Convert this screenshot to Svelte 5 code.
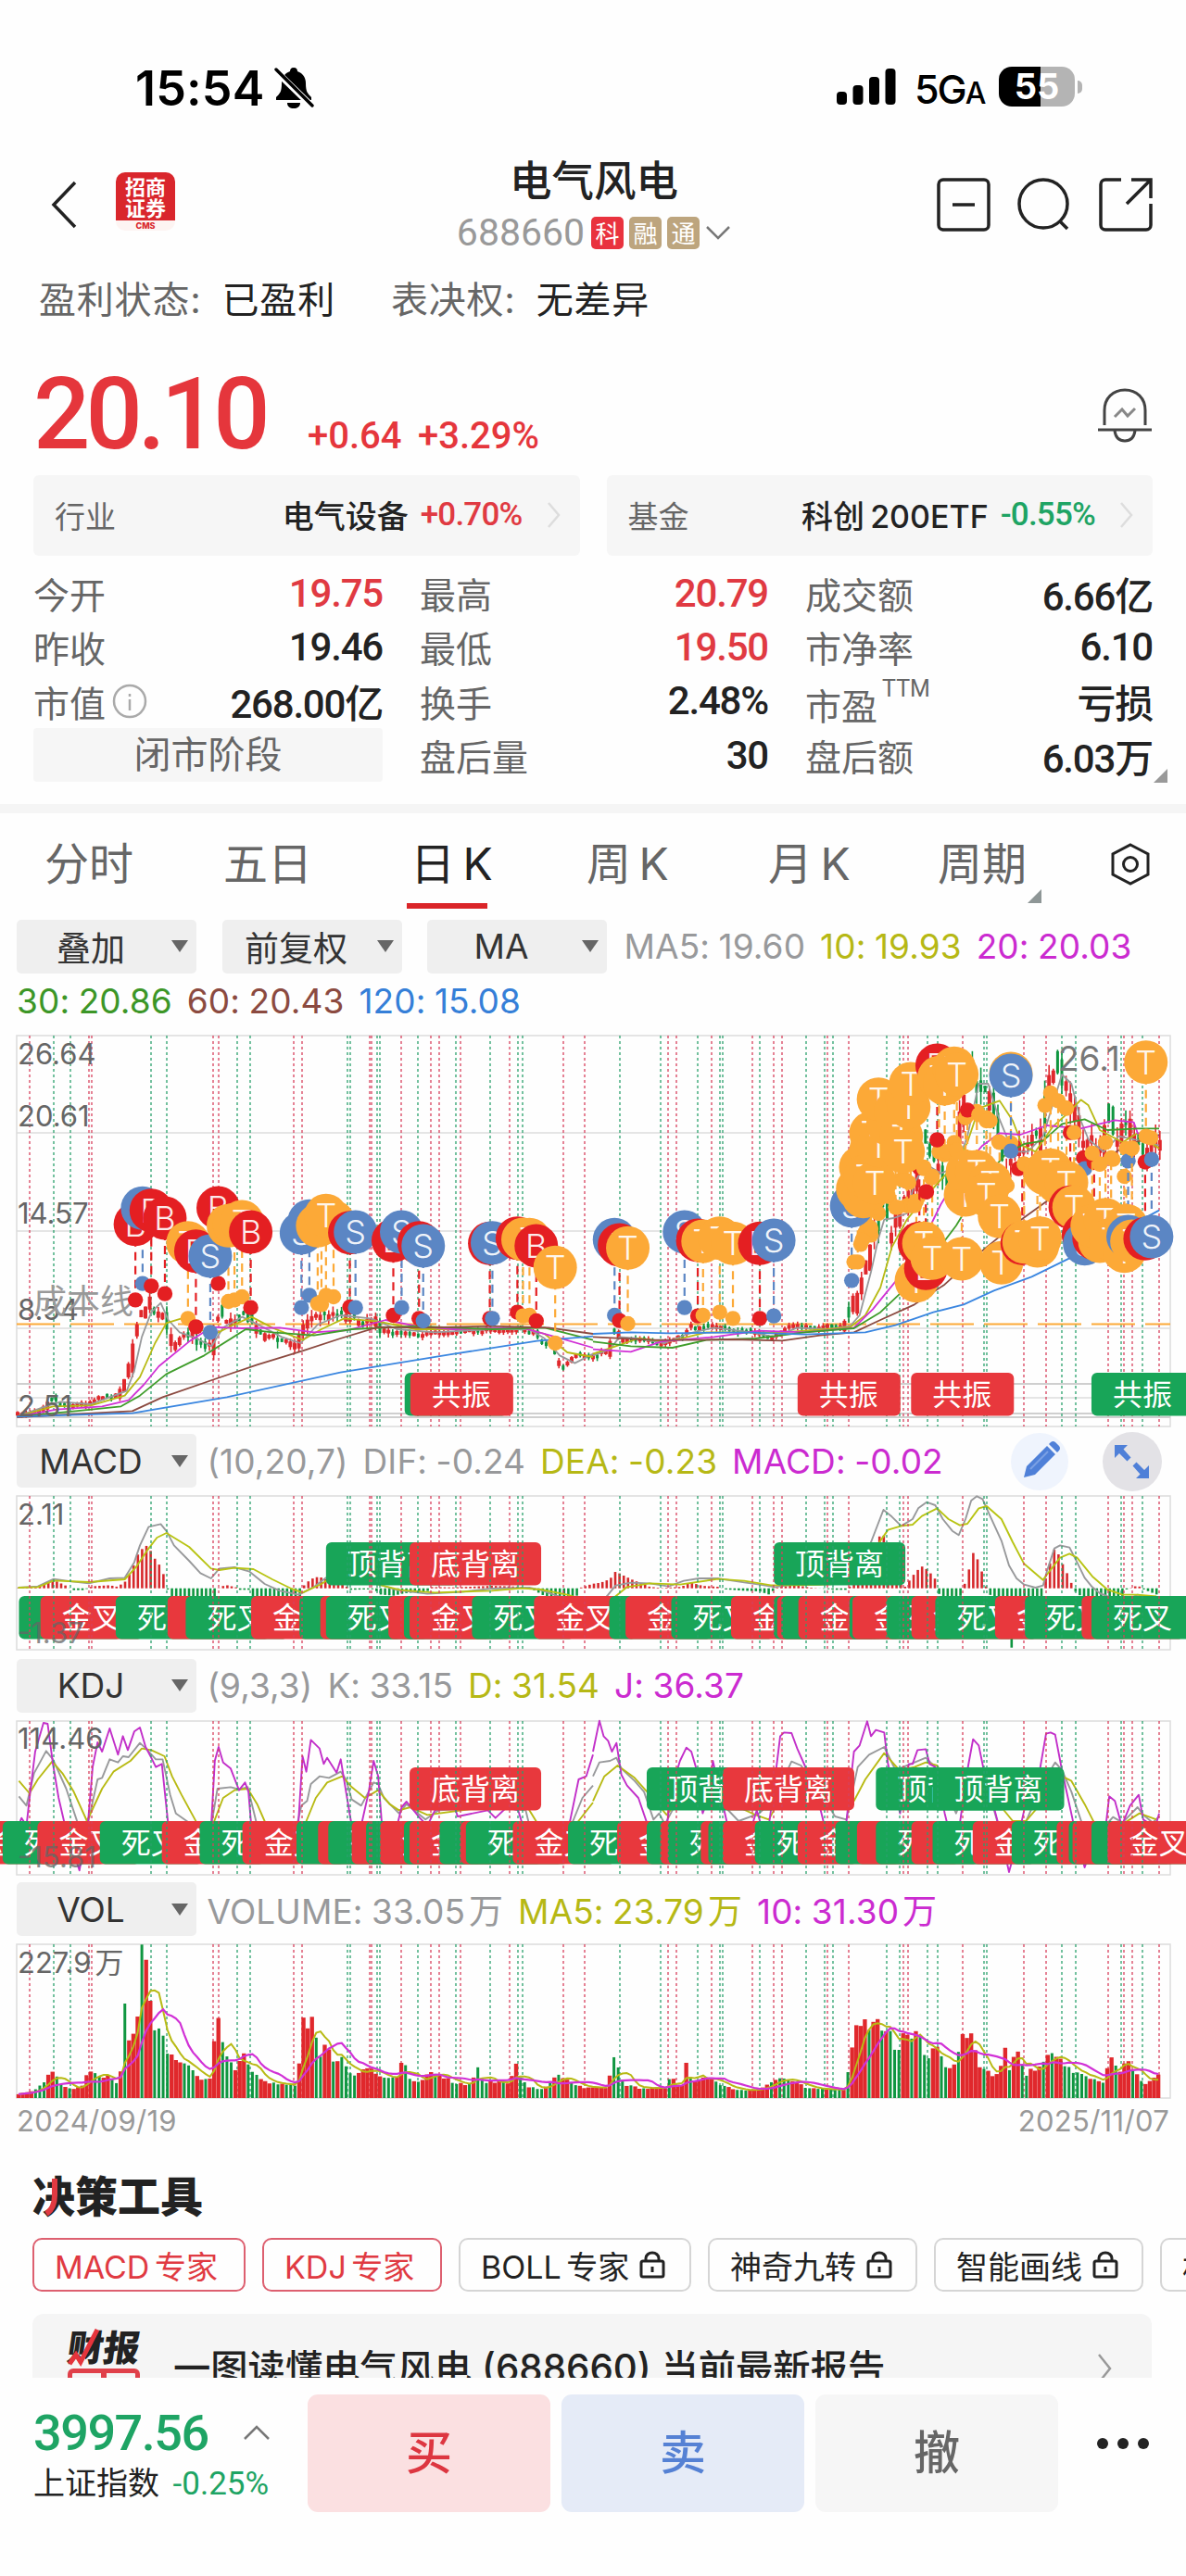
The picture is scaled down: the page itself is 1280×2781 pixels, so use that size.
<script lang="ts">
  const quotes = [
    { label: '今开', value: '19.75', up: true },
    { label: '最高', value: '20.79', up: true },
    { label: '成交额', value: '6.66亿' },
    { label: '昨收', value: '19.46' },
    { label: '最低', value: '19.50', up: true },
    { label: '市净率', value: '6.10' },
    { label: '市值', value: '268.00亿', info: true },
    { label: '换手', value: '2.48%' },
    { label: '市盈', value: '亏损', sup: 'TTM' },
    { label: '闭市阶段', stage: true },
    { label: '盘后量', value: '30' },
    { label: '盘后额', value: '6.03万', corner: true }
  ];

  const tabs = [
    { name: '分时', left: 48 },
    { name: '五日', left: 241 },
    { name: '日 K', left: 443, active: true },
    { name: '周 K', left: 633 },
    { name: '月 K', left: 829 },
    { name: '周期', left: 1012 }
  ];

  const chips = [
    { name: 'MACD 专家', width: 230, on: true },
    { name: 'KDJ 专家', width: 194, on: true },
    { name: 'BOLL 专家', width: 251, lock: true },
    { name: '神奇九转', width: 226, lock: true },
    { name: '智能画线', width: 226, lock: true },
    { name: '机构', width: 226 }
  ];

  // signal lines shared by all four charts
  const redLines = [32, 96, 99, 230, 236, 317, 326, 399, 401, 433, 465, 474, 497, 550, 608, 631, 721, 730, 768, 812, 835, 844, 893, 916, 975, 980, 1039, 1105, 1129, 1196, 1213, 1222, 1251];
  const greenLines = [58, 76, 163, 180, 256, 270, 375, 378, 407, 410, 451, 492, 529, 559, 564, 669, 713, 753, 777, 780, 820, 870, 890, 899, 957, 971, 1001, 1012, 1062, 1065, 1146, 1161, 1210, 1233];

  // chart data is sampled on a 2.45 x 3 grid, split into two halves of 640px
  const GX = 2.45;
  const GY = 3;
  const HALF = 'translate(640 0) scale(0.408163 0.333333)';
  const FULL = 'scale(0.408163 0.333333)';

  let seed = 7;
  function rnd() {
    seed = (seed * 16807) % 2147483647;
    return seed / 2147483647;
  }

  function at(pts: number[][], x: number) {
    if (x <= pts[0][0]) return pts[0][1];
    for (let i = 1; i < pts.length; i++) {
      if (x <= pts[i][0]) {
        const [x0, y0] = pts[i - 1];
        const [x1, y1] = pts[i];
        return y0 + ((y1 - y0) * (x - x0)) / (x1 - x0);
      }
    }
    return pts[pts.length - 1][1];
  }

  const pairs = (s: string) => s.trim().split(/\s+/).map((p) => p.split(',').map(Number));

  const price = pairs(`18,418 41,413 50,408 58,397 64,405 76,408 96,405 106,399 127,397 133,388 137,375 142,362 146,337 150,307 155,315 159,297
    163,300 169,313 178,310 182,327 188,343 200,327 212,337 229,343 234,330 236,300 245,317 261,310 271,313 282,330 302,337 322,341 329,320 339,312
    367,307 388,317 408,313 412,330 433,328 457,331 490,328 563,325 580,330 586,340 600,343 603,362 608,367 616,360 624,353 640,355 658,347 664,323
    671,337 689,335 713,342 738,333 744,323 771,322 795,327 820,328 832,337 852,322 885,323 913,323 917,308 926,290 932,267 940,243 946,213 954,187
    962,220 975,190 987,167 999,123 1011,147 1024,160 1040,83 1048,40 1056,67 1069,77 1077,107 1085,153 1097,133 1113,123 1126,113 1130,67 1142,30
    1150,67 1162,93 1171,133 1179,123 1191,140 1197,87 1207,127 1216,103 1232,133 1252,123`);

  const candles: any[] = [];
  for (let x = 19; x < 1254; x += 4.6) {
    const a = at(price, x);
    const b = at(price, x + 4.6);
    const wild = x > 915 ? 14 : x > 140 && x < 420 ? 7 : 3;
    const mid = a + (rnd() - 0.5) * wild;
    const body = Math.max(4, Math.abs(b - a) * 0.9 + rnd() * wild);
    const wick = body / 2 + rnd() * wild;
    candles.push({ x, y: mid - body / 2, h: body, y1: mid - wick, y2: mid + wick, up: b < a ? rnd() > 0.15 : rnd() > 0.6 });
  }

  // kind, x, badge y, dot y
  const leftMarks = `B,358,635,880 S,377,583,827 B,400,590,835 B,436,615,860 T,497,695,940 B,518,722,967 S,556,738,985 B,577,582,827
    T,604,640,885 T,620,636,880 T,640,627,870 B,663,660,905 S,797,663,905 S,818,625,865 T,840,640,892 T,850,632,895 T,882,628,870 T,862,607,865
    B,925,662,903 S,940,660,905 B,1040,688,930 S,1062,660,905 B,1108,695,940 S,1119,705,948 B,1295,697,940 S,1302,695,940 B,1368,680,920
    T,1383,684,932 T,1400,685,930 B,1418,705,948 T,1468,775,1020`;
  const rightMarks = `S,57,685,930 B,70,702,947 T,92,712,957 S,242,660,905 B,277,687,932 T,291,690,930 T,335,680,920 T,370,697,940 B,441,697,940 S,478,687,932
    S,684,575,817 T,700,520,757 T,715,545,680 T,730,520,645 T,708,450,700 T,735,395,670 T,720,480,660 T,745,500,590 T,735,340,650 T,755,380,600
    T,780,310,545 T,755,230,540 T,800,270,580 T,815,350,490 T,830,230,575 T,835,255,500 T,820,400,492 T,840,180,575
    B,910,120,362 T,915,160,400 T,930,180,410 T,955,130,370 T,962,150,420
    T,855,818,560 B,880,778,530 B,863,697,452 T,875,697,450 T,897,745,480 T,975,747,430
    T,985,540,290 T,990,465,280 T,1015,465,270 T,1050,500,300 T,1040,540,290 T,1075,610,370 T,1080,760,510 B,1135,697,450 T,1140,692,440 T,1175,705,430 T,1182,680,420
    T,1195,470,250 T,1210,460,210 T,1230,500,235 T,1252,500,260 B,1262,580,338 T,1272,580,338 B,1297,670,420 S,1300,698,455 B,1325,680,435
    T,1340,690,440 T,1320,640,405 T,1355,620,370 T,1370,685,420 T,1410,640,390 T,1405,722,480 S,1415,675,430 T,1425,690,390 B,1460,682,433 S,1477,675,425
    T,1105,147,372 S,1105,153,398 T,1462,110,350`;
  const toMarks = (s: string, off: number) =>
    s.trim().split(/\s+/).map((m) => {
      const [k, x, y, d] = m.split(',');
      return { k, x: off + +x / GX, y: +y / GY, d: +d / GY };
    });
  const marks = [...toMarks(leftMarks, 0), ...toMarks(rightMarks, 640)];
  const tone: Record<string, string> = { B: '#e41f22', S: '#5b86c4', T: '#fca937' };

  const dots = toMarks(`B,990,265,265 T,1020,280,280 T,1040,300,300 T,1073,368,368 B,1125,455,455 T,1150,445,445 T,1140,440,440 T,1250,258,258
    T,1340,440,440 T,1375,425,425 T,1475,355,355 T,780,540,540 T,805,580,580 T,825,490,490 T,690,757,757 T,712,685,685 T,733,645,645 T,875,455,455
    T,895,485,485 B,882,530,530 T,935,400,400 T,960,395,395 B,910,362,362 T,1095,510,510 T,1180,440,440 T,1425,388,388 T,850,575,575`, 640);

  const ma = [
    { color: '#98999b', l: '45,1258 120,1225 160,1210 240,1218 290,1195 335,1175 355,1110 375,1000 400,920 425,890 445,945 475,985 520,1005 560,1030 590,970 640,935 690,965 745,1000 795,1020 840,960 900,930 980,940 1010,955 1050,975 1150,985 1300,975 1400,975 1440,1005 1480,1060 1520,1085 1568,1055', r: '0,1060 45,1040 70,1000 120,1005 190,1020 250,990 320,970 420,985 480,1000 540,970 620,975 680,965 705,930 735,790 755,680 770,620 795,615 830,600 850,500 880,440 920,470 960,450 990,350 1020,180 1045,180 1070,280 1110,400 1150,400 1190,350 1225,210 1240,150 1265,180 1290,300 1310,360 1350,400 1390,350 1430,360 1497,380' },
    { color: '#b8ba14', l: '45,1258 140,1225 240,1222 330,1190 370,1130 410,1020 440,955 480,940 520,975 570,990 610,965 665,935 720,970 800,1010 850,975 910,940 1000,950 1100,975 1200,975 1380,970 1440,990 1500,1050 1568,1065', r: '0,1055 60,1030 120,1005 200,1015 300,985 420,985 500,985 620,975 680,968 720,930 760,840 790,710 830,620 870,560 920,490 960,440 990,370 1020,260 1075,235 1110,300 1135,380 1170,400 1215,320 1260,270 1290,232 1310,250 1340,330 1400,370 1440,340 1497,390' },
    { color: '#d131d6', l: '45,1258 150,1235 270,1225 340,1205 380,1155 420,1095 500,1015 560,968 640,972 740,970 830,985 920,978 1020,945 1100,965 1200,975 1380,970 1470,1000 1568,1035', r: '0,1040 100,1048 180,1015 320,1000 440,980 560,985 690,970 740,910 800,820 860,720 920,570 980,450 1030,380 1075,340 1130,345 1200,315 1290,325 1380,298 1430,305 1440,340 1497,350' },
    { color: '#3f9d2b', l: '45,1258 200,1240 320,1225 370,1190 440,1120 540,1060 650,975 720,985 830,995 930,975 1100,965 1300,975 1440,970 1568,1010', r: '0,1015 100,1030 210,1035 300,1010 430,1005 560,985 690,972 760,920 820,850 880,770 960,640 1040,480 1090,410 1140,375 1190,365 1240,310 1300,295 1360,330 1440,325 1497,325' },
    { color: '#8b4a40', l: '45,1260 200,1250 350,1240 430,1195 560,1140 680,1090 800,1045 900,1005 1000,968 1120,970 1300,965 1450,970 1568,990', r: '0,1000 160,1010 260,1010 370,1008 500,1012 600,995 690,985 760,945 850,895 930,830 1020,730 1110,640 1200,560 1270,490 1340,430 1420,375 1497,345' },
    { color: '#3a86e0', l: '45,1258 350,1247 600,1195 900,1115 1200,1055 1420,1013 1568,998', r: '0,990 100,985 200,988 400,985 560,992 720,985 800,962 900,920 980,895 1060,850 1160,805 1260,745 1340,690 1420,640 1497,590' }
  ];

  const histPts = [
    ...pairs(`45,2 100,5 125,18 137,30 175,8 190,-6 225,-6 235,3 250,7 290,10 310,5 330,20 347,55 368,120 390,140 410,95 425,70 437,30 441,2 452,-25 570,-25
      580,5 600,10 625,3 630,-5 660,-5 668,-25 795,-25 800,5 822,30 843,38 880,20 915,8 925,-5 990,-3 1005,-20 1040,-24 1070,-16 1130,-10 1140,4 1200,3
      1300,8 1380,5 1400,2 1425,-15 1440,-25 1525,-25 1535,2 1568,15`).map(([x, y]) => [x / GX, y / GY]),
    ...pairs(`1,15 20,18 45,30 60,55 75,45 100,30 150,5 180,1 235,5 255,20 290,8 330,5 345,-3 400,-8 440,-10 465,-20 480,-5 490,5 540,10 570,3 640,-5 675,-5
      680,10 720,60 760,175 770,170 800,60 815,20 825,5 845,40 868,72 885,60 905,30 912,-10 920,-30 970,-30 980,4 990,40 1005,115 1015,100 1035,30
      1041,-3 1055,-30 1092,-40 1100,-195 1112,-190 1118,-40 1190,-30 1198,40 1222,135 1245,70 1257,40 1270,2 1280,-20 1310,-30 1400,-25 1412,-2 1426,2
      1440,10 1455,-3 1490,-20 1500,-10`).map(([x, y]) => [640 + x / GX, y / GY])
  ];
  const hist: any[] = [];
  for (let x = 20; x < 1252; x += 4.6) hist.push({ x, v: at(histPts, x) });

  const dif = [
    '48,522 100,518 142,494 190,502 235,508 290,492 330,490 355,440 370,385 393,325 425,316 441,340 460,385 500,435 530,475 558,492 580,460 620,456 660,470 700,510 740,532 790,545 830,520 862,490 930,480 1010,515 1050,530 1130,542 1220,536 1300,525 1400,522 1430,530 1500,560 1568,590',
    '0,600 40,545 60,515 100,506 150,508 200,518 240,500 280,492 330,492 400,505 440,512 480,520 540,510 600,512 660,500 700,470 735,375 768,270 790,292 815,322 845,300 860,265 882,245 905,255 925,300 950,338 967,352 985,300 1000,240 1015,226 1030,235 1050,290 1080,370 1100,450 1120,492 1140,512 1170,522 1190,515 1200,470 1220,395 1235,385 1260,392 1280,440 1300,490 1320,520 1340,540 1400,570 1440,545 1490,560'
  ];
  const dea = [
    '48,522 100,520 142,499 235,504 330,495 360,455 390,400 415,360 440,345 500,390 558,460 580,465 620,458 670,462 720,495 770,525 800,538 850,510 862,500 930,490 1010,515 1060,530 1150,538 1300,532 1380,524 1430,528 1500,545 1568,570',
    '0,580 60,550 90,520 150,508 230,512 330,494 400,500 470,514 540,514 620,512 680,505 720,460 760,370 780,335 815,322 845,318 870,290 910,265 940,300 970,320 990,315 1020,265 1041,258 1080,300 1110,375 1140,445 1190,497 1200,480 1235,425 1260,412 1280,425 1320,485 1360,528 1400,545 1440,545 1490,550'
  ];

  const kdj = [
    { color: '#98999b', l: '50,1195 70,1225 90,1120 122,1048 140,1075 175,1170 205,1280 233,1280 258,1140 270,1135 290,1075 312,1085 325,1065 340,1068 370,1022 390,1045 412,1075 430,1075 450,1190 465,1250 500,1280 560,1280 575,1170 610,1165 632,1172 655,1165 668,1230 680,1290 785,1290 797,1225 812,1210 822,1155 845,1130 870,1135 901,1115 915,1140 930,1205 955,1225 988,1150 1000,1155 1015,1200 1055,1250 1075,1220 1125,1270 1160,1240 1300,1230 1390,1240 1400,1290 1510,1290 1540,1200 1568,1160', r: '0,1130 17,1085 45,1080 62,1070 75,1105 110,1145 135,1180 160,1270 175,1250 190,1285 210,1240 247,1130 272,1130 300,1180 317,1150 350,1230 385,1275 440,1250 480,1200 525,1082 550,1095 600,1180 640,1260 670,1270 700,1100 730,1060 770,1035 800,1110 840,1090 880,1070 905,1100 960,1250 1005,1110 1035,1130 1070,1280 1140,1290 1190,1150 1222,1085 1240,1110 1265,1180 1295,1290 1355,1290 1375,1262 1400,1280 1440,1230 1455,1255 1480,1280 1497,1260' },
    { color: '#b8ba14', l: '50,1145 78,1185 100,1140 138,1082 165,1120 195,1180 230,1275 270,1170 300,1115 345,1080 375,1040 400,1045 435,1065 455,1130 480,1190 520,1280 565,1280 590,1200 620,1175 655,1170 680,1220 705,1290 805,1290 835,1200 865,1150 905,1130 930,1165 965,1200 1000,1175 1030,1220 1055,1240 1085,1230 1130,1255 1250,1235 1390,1220 1420,1280 1520,1290 1568,1215', r: '0,1210 30,1130 65,1095 110,1135 150,1190 195,1255 230,1200 270,1150 330,1160 385,1230 430,1255 465,1270 500,1190 545,1120 600,1150 650,1220 690,1210 720,1140 770,1055 810,1110 850,1100 880,1085 910,1095 950,1180 1000,1160 1040,1140 1080,1230 1110,1275 1145,1275 1190,1210 1240,1130 1265,1145 1300,1220 1325,1280 1400,1285 1445,1250 1490,1270' },
    { color: '#c22fc9', l: '45,1300 57,1265 70,1290 80,1180 93,1050 115,957 126,960 140,1090 155,1200 172,1290 210,1435 232,1290 245,1100 258,1020 270,1050 290,975 312,1060 325,1000 338,1045 355,985 370,972 385,1035 400,1070 412,1100 428,1090 446,1300 558,1300 568,1080 578,1035 590,1085 610,1105 632,1175 648,1150 657,1180 665,1300 788,1300 800,1065 810,1115 822,1012 845,1040 856,1090 865,1070 890,1118 901,1075 915,1180 930,1290 955,1290 975,1180 988,1080 1000,1130 1010,1290 1050,1290 1062,1230 1075,1212 1110,1265 1130,1290 1150,1240 1200,1220 1210,1260 1290,1240 1310,1265 1340,1230 1370,1240 1385,1300 1503,1300 1530,1140 1550,1130 1568,1060', r: '0,1050 17,950 28,1000 40,1015 50,1050 62,1022 75,1125 90,1160 120,1200 148,1300 195,1300 205,1180 230,1080 247,1037 260,1050 272,1100 290,1250 305,1200 317,1080 330,1150 358,1300 418,1300 433,1240 445,1290 465,1290 480,1150 495,1000 505,988 525,990 540,1040 560,1095 590,1180 614,1300 668,1300 690,1050 705,1030 725,952 735,1000 748,980 770,988 780,1090 812,1250 835,1090 845,1090 858,1045 880,1042 890,1090 905,1100 930,1250 940,1300 968,1300 990,1110 1005,1010 1020,1030 1035,1120 1060,1230 1075,1300 1100,1440 1120,1350 1140,1240 1180,1120 1198,992 1210,988 1222,995 1240,1110 1270,1280 1300,1425 1330,1320 1355,1300 1365,1195 1380,1210 1398,1290 1420,1225 1443,1190 1455,1270 1480,1290 1490,1280 1497,1250' }
  ];

  const volPts = pairs(`22,12 45,25 58,50 62,80 68,90 80,50 95,25 110,40 117,85 130,70 145,70 158,35 162,160 165,160 168,305 172,140 178,265 187,285 190,497 195,380 200,320
    205,220 212,235 222,150 235,130 250,105 265,60 280,65 284,200 290,285 296,165 300,130 310,90 322,140 335,80 350,55 370,45 390,40 396,110 401,250 405,170
    411,325 416,200 425,140 433,200 440,110 450,140 460,90 470,70 487,100 510,65 527,65 533,140 540,60 555,50 567,85 585,70 600,50 620,45 632,100 640,50 655,55
    670,45 682,105 690,60 700,35 720,30 737,75 750,60 770,35 803,35 810,130 817,100 825,45 850,30 880,35 886,75 895,40 903,45 908,125 915,50 940,70 955,40 980,25
    1005,30 1025,65 1047,60 1065,35 1090,30 1118,25 1123,140 1130,210 1141,270 1147,190 1152,240 1163,245 1168,180 1174,260 1185,140 1195,210 1215,200
    1225,130 1240,180 1250,95 1262,120 1273,200 1285,215 1292,110 1310,80 1320,70 1328,170 1335,90 1345,155 1355,75 1375,110 1390,155 1410,100 1430,75
    1460,50 1467,135 1480,80 1489,130 1500,80 1515,45 1534,80`).map(([x, y]) => [x / 1.225, y / 3]);
  const vols: any[] = [];
  for (let i = 0; i < 269; i++) {
    const x = 20 + i * 4.59;
    const v = at(volPts, x);
    const falling = at(volPts, x - 4.6) > v;
    vols.push({ x, v: Math.max(4, v * (0.9 + rnd() * 0.18)), up: falling ? rnd() > 0.7 : rnd() > 0.12 });
  }
  // the two tallest green sessions
  for (const [px, v] of [[137, 102], [155, 165.7]]) {
    const b = vols[Math.round((px - 20) / 4.59)];
    b.v = v;
    b.up = false;
  }
  function average(n: number) {
    return vols
      .map((b, i) => {
        const part = vols.slice(Math.max(0, i - n + 1), i + 1);
        return `${b.x.toFixed(1)},${(234 - part.reduce((s, p) => s + p.v, 0) / part.length).toFixed(1)}`;
      })
      .join(' ');
  }
  const vol5 = average(5);
  const vol10 = average(10);

  // color, x, text
  const tags = (s: string, off: number, y: number) =>
    s.trim().split(/\s+/).map((t) => {
      const [c, x, text] = t.split(',');
      const label = text ?? (c === 'R' ? '金叉' : '死叉');
      return { c, x: off + +x / GX, y, label, w: label.length === 3 ? 142 : 111 };
    });
  const mainTags = [...tags('G,1070,共振 R,1085,共振', 0, 372), ...tags('R,541,共振 R,841,共振 G,1318,共振', 640, 372)];
  const macdTags = [
    ...tags('G,50 R,107 G,306 R,443 G,491 R,664 G,792 R,847 G,862 R,1027 G,1068 R,1083 G,1248 R,1412', 0, 183),
    ...tags('G,43 R,86 G,207 R,365 G,478 R,487 G,498 R,543 G,678 R,686 G,777 R,842 G,905 R,1063 G,1142 R,1292 G,1318', 640, 183),
    ...tags('G,862,顶背离 R,1083,底背离', 0, 125),
    ...tags('G,478,顶背离', 640, 125)
  ];
  const kdjTags = [
    ...tags('R,-80 G,7 R,99 G,264 R,428 G,528 R,641 G,784 R,841 G,868 R,930 G,968 R,1005 G,1068 R,1083 G,1162 R,1218 G,1232 R,1356 G,1502', 0, 425),
    ...tags('R,64 G,142 R,178 G,198 R,285 G,305 R,343 G,428 R,541 G,641 R,698 G,748 R,842 G,898 R,1004 G,1107 R,1226 G,1258 R,1268 G,1318 R,1361', 640, 425),
    ...tags('R,1083,底背离', 0, 367),
    ...tags('G,142,顶背离 R,343,底背离 G,748,顶背离 G,898,顶背离', 640, 367)
  ];
</script>

{#snippet signals(y1, y2)}
  {#each redLines as x}
    <line x1={x} x2={x} {y1} {y2} class="sig red" />
  {/each}
  {#each greenLines as x}
    <line x1={x} x2={x} {y1} {y2} class="sig green" />
  {/each}
{/snippet}

{#snippet pills(list)}
  {#each list as t}
    <rect x={t.x} y={t.y} width={t.w} height="46.5" rx="6" fill={t.c === 'R' ? '#e8383d' : '#18a558'} />
    <text x={t.x + 23} y={t.y + 35} class="pill">{t.label}</text>
  {/each}
{/snippet}

{#snippet drop(name)}
  <div class="drop"><span>{name}</span><i></i></div>
{/snippet}

{#snippet arrow()}
  <svg class="arrow" width="16" height="30" viewBox="0 0 16 30"><path d="M2 2l11 13L2 28" /></svg>
{/snippet}

<main class="screen">
  <div class="status">
    <span class="time">15:54</span>
    <svg class="mute" width="44" height="46" viewBox="0 0 44 46">
      <path d="M22 1c3 0 4 2 4 4 6 2 9 7 9 13 0 9 2 11 6 15v3H3v-3c4-4 6-6 6-15 0-6 3-11 9-13 0-2 1-4 4-4zM15 39h14c0 4-3 6-7 6s-7-2-7-6z" />
      <path d="M1 3l41 40" stroke="#fff" stroke-width="7" />
      <path d="M3 3l39 39" stroke="#000" stroke-width="3.4" stroke-linecap="round" />
    </svg>
    <svg class="signal" width="64" height="40" viewBox="0 0 64 40">
      <rect x="0" y="25" width="11" height="14" rx="4" />
      <rect x="17.5" y="18" width="11" height="21" rx="4" />
      <rect x="35" y="9" width="11" height="30" rx="4" />
      <rect x="52.5" y="0" width="11" height="39" rx="4" />
    </svg>
    <span class="net">5G<small>A</small></span>
    <div class="battery"><span>55</span></div>
  </div>

  <header>
    <svg class="back" width="30" height="52" viewBox="0 0 30 52"><path d="M27 2L4 26l23 24" /></svg>
    <div class="logo"><b>招商<br />证券</b><em>CMS</em></div>
    <div class="title">
      <h1>电气风电</h1>
      <div class="code">
        <span>688660</span><i class="hot">科</i><i>融</i><i>通</i>
        <svg width="28" height="18" viewBox="0 0 28 18"><path d="M2 3l12 12L26 3" /></svg>
      </div>
    </div>
    <div class="tools">
      <svg width="58" height="58" viewBox="0 0 58 58"><rect x="2" y="2" width="54" height="54" rx="5" /><path d="M17 29h24" /></svg>
      <svg width="58" height="58" viewBox="0 0 58 58"><circle cx="28" cy="28" r="26" /><path d="M45 46l9 9" /></svg>
      <svg width="58" height="58" viewBox="0 0 58 58"><path d="M24 2H7a5 5 0 0 0-5 5v44a5 5 0 0 0 5 5h44a5 5 0 0 0 5-5V28M35 2h21v20M56 2L30 28" /></svg>
    </div>
  </header>

  <div class="traits">
    <span>盈利状态:</span><b>已盈利</b><span class="second">表决权:</span><b>无差异</b>
  </div>

  <section class="price">
    <strong>20.10</strong><span>+0.64</span><span class="pct">+3.29%</span>
    <svg width="60" height="60" viewBox="0 0 60 60">
      <path d="M8 40V24C8 11 17 2 30 2s22 9 22 22v16M1 45h58M19 46c1 7 5 11 11 11s10-4 11-11" />
      <path class="soft" d="M19 31l8-8 6 7 8-8" />
    </svg>
  </section>

  <div class="related">
    <div class="card"><span>行业</span><b>电气设备</b><em class="up">+0.70%</em>{@render arrow()}</div>
    <div class="card"><span>基金</span><b>科创 200ETF</b><em class="down">-0.55%</em>{@render arrow()}</div>
  </div>

  <div class="quotes">
    {#each quotes as q}
      {#if q.stage}
        <div class="stage">{q.label}</div>
      {:else}
        <div class="quote" class:low={q.sup}>
          <span>{q.label}</span>
          {#if q.info}
            <svg width="38" height="38" viewBox="0 0 38 38"><circle cx="19" cy="19" r="17" /><path d="M19 11v3M19 17v12" /></svg>
          {/if}
          {#if q.sup}<sup>{q.sup}</sup>{/if}
          <b class:red={q.up}>{q.value}</b>
          {#if q.corner}<i class="corner"></i>{/if}
        </div>
      {/if}
    {/each}
  </div>

  <nav>
    {#each tabs as tab, i}
      <span class:active={tab.active} style:width="{(tabs[i + 1]?.left ?? 1198) - tab.left}px">{tab.name}{#if i === 5}<i class="corner"></i>{/if}</span>
    {/each}
    <svg width="44" height="46" viewBox="0 0 44 46"><path d="M22 2l19 10v22L22 44 3 34V12z" /><circle cx="22" cy="23" r="7.5" /></svg>
  </nav>

  <div class="indicators">
    {@render drop('叠加')}
    {@render drop('前复权')}
    {@render drop('MA')}
    <span class="gray">MA5: 19.60</span><span class="olive">10: 19.93</span><span class="pink">20: 20.03</span>
  </div>
  <div class="indicators second-row">
    <span class="leaf">30: 20.86</span><span class="brown">60: 20.43</span><span class="blue">120: 15.08</span>
  </div>

  <svg class="chart" width="1280" height="439" viewBox="0 0 1280 439">
    <rect x="18" y="8" width="1245" height="422" class="frame" />
    {#each [113, 219, 324, 399] as y}
      <path d="M18 {y}H1263" class="grid" />
    {/each}
    <path d="M18 384H1263M18 416H1263M18 420H1263" class="grid heavy" />
    {@render signals(8, 430)}
    <path d="M18 319.5H1263" stroke="#fca937" stroke-width="2" stroke-dasharray="47 11" />
    {#each candles as c}
      <path d="M{c.x} {c.y1}V{c.y2}" stroke={c.up ? '#e0282c' : '#0f9640'} stroke-width="1.6" />
      <path d="M{c.x} {c.y}v{c.h}" stroke={c.up ? '#e0282c' : '#0f9640'} stroke-width={c.up ? 4 : 3} />
    {/each}
    {#each ma as m}
      <g fill="none" stroke={m.color} stroke-width="1.8">
        <polyline class="curve" transform={FULL} points={m.l} />
        <polyline class="curve" transform={HALF} points={m.r} />
      </g>
    {/each}
    <text x="19" y="39" class="axis">26.64</text>
    <text x="19" y="106" class="axis">20.61</text>
    <text x="19" y="211" class="axis">14.57</text>
    <text x="19" y="315" class="axis">8.54</text>
    <text x="19" y="419" class="axis">2.51</text>
    <text x="36" y="308" class="cost">成本线</text>
    <text x="1142" y="46" class="peak">26.1</text>
    {#each marks as m}
      <path d="M{m.x} {m.y}V{m.d}" stroke={tone[m.k]} stroke-width="2.2" stroke-dasharray="9 6" />
      <circle cx={m.x} cy={m.d} r="8.2" fill={tone[m.k]} />
    {/each}
    {#each dots as m}
      <circle cx={m.x} cy={m.y} r="8.2" fill={tone[m.k]} />
    {/each}
    {#each marks as m}
      <circle cx={m.x} cy={m.y} r="23.5" fill={tone[m.k]} />
      <text x={m.x} y={m.y + 13} class="badge">{m.k}</text>
    {/each}
    {@render pills(mainTags)}
  </svg>

  <div class="indicators">
    {@render drop('MACD')}
    <span class="gray">(10,20,7)</span><span class="gray">DIF: -0.24</span><span class="olive">DEA: -0.23</span><span class="pink">MACD: -0.02</span>
    <svg class="round" width="64" height="64" viewBox="0 0 64 64">
      <circle cx="32" cy="32" r="31" fill="#eff4fd" />
      <path d="M15 49l3-12 22-22 9 9-22 22zM42 13l2-2a4 4 0 0 1 5 0l4 4a4 4 0 0 1 0 5l-2 2z" fill="#4f80d8" />
      <path d="M22 40l19-19" stroke="#7ba0e4" stroke-width="2" />
    </svg>
    <svg class="round last" width="64" height="64" viewBox="0 0 64 64">
      <circle cx="32" cy="32" r="32" fill="#e3e2e6" />
      <g fill="#4f80d8"><path d="M13 14h14l-4.5 4.5 8 9-4 4-8.5-8.5L13 28z" /><path d="M50 50H36l4.5-4.5-8-9 4-4 8.5 8.5L50 36z" /></g>
    </svg>
  </div>

  <svg class="chart" width="1280" height="185" viewBox="0 66 1280 185">
    <rect x="18" y="75" width="1245" height="166" class="frame" />
    {#each hist as h}
      <path d="M{h.x} 174.7v{-h.v}" stroke={h.v > 0 ? '#d6282b' : '#0f9640'} stroke-width="2.6" />
    {/each}
    <g fill="none" stroke="#98999b" stroke-width="1.9">
      <polyline class="curve" transform={FULL} points={dif[0]} />
      <polyline class="curve" transform={HALF} points={dif[1]} />
    </g>
    <g fill="none" stroke="#b8c414" stroke-width="1.9">
      <polyline class="curve" transform={FULL} points={dea[0]} />
      <polyline class="curve" transform={HALF} points={dea[1]} />
    </g>
    {@render pills(macdTags)}
    {@render signals(75, 241)}
    <text x="19" y="106" class="axis">2.11</text>
    <text x="19" y="234" class="axis faint">-1.37</text>
  </svg>

  <div class="indicators">
    {@render drop('KDJ')}
    <span class="gray">(9,3,3)</span><span class="gray">K: 33.15</span><span class="olive">D: 31.54</span><span class="pink">J: 36.37</span>
  </div>

  <svg class="chart" width="1280" height="184" viewBox="0 308 1280 184">
    <rect x="18" y="317" width="1245" height="166" class="frame" />
    {#each kdj as k}
      <g fill="none" stroke={k.color} stroke-width="1.9">
        <polyline class="curve" transform={FULL} points={k.l} />
        <polyline class="curve" transform={HALF} points={k.r} />
      </g>
    {/each}
    {@render pills(kdjTags)}
    {@render signals(317, 483)}
    <text x="19" y="347" class="axis">114.46</text>
    <text x="19" y="475" class="axis faint">-15.81</text>
  </svg>

  <div class="indicators">
    {@render drop('VOL')}
    <span class="gray">VOLUME: 33.05<u>万</u></span><span class="olive">MA5: 23.79<u>万</u></span><span class="pink">10: 31.30<u>万</u></span>
  </div>

  <svg class="chart" width="1280" height="183" viewBox="0 59 1280 183">
    <rect x="18" y="68" width="1245" height="166" class="frame" />
    {@render signals(68, 234)}
    {#each vols as b}
      <path d="M{b.x} 234v{-b.v}" stroke={b.up ? '#e0282c' : '#0f9640'} stroke-width={b.up ? 4.4 : 3} />
    {/each}
    <polyline points={vol5} fill="none" stroke="#b8ba14" stroke-width="2" />
    <polyline points={vol10} fill="none" stroke="#d131d6" stroke-width="2.2" />
    <text x="19" y="99" class="axis">227.9<tspan dx="4">万</tspan></text>
  </svg>
  <div class="dates"><span>2024/09/19</span><span>2025/11/07</span></div>

  <section class="decision">
    <h2>决策工具
      <svg width="20" height="42" viewBox="0 0 20 42"><path d="M13 2v18c0 9-3 16-9 20" /></svg>
    </h2>
    <div class="chips">
      {#each chips as chip}
        <div class="chip" class:on={chip.on} style:width="{chip.width}px">
          {chip.name}
          {#if chip.lock}
            <svg width="28" height="30" viewBox="0 0 28 30"><rect x="2" y="11" width="24" height="17" rx="2" /><path d="M7 11V8a7 6 0 0 1 14 0v3M14 17v6" /></svg>
          {/if}
        </div>
      {/each}
    </div>
    <div class="report">
      <div class="brand">
        <b>财报</b>
        <svg width="36" height="42" viewBox="0 0 36 42"><path d="M2 38l7-10 5 8L32 1" /></svg>
        <i></i>
      </div>
      <p>一图读懂电气风电 (688660) 当前最新报告</p>
      <svg class="go" width="18" height="34" viewBox="0 0 18 34"><path d="M3 2l12 15L3 32" /></svg>
    </div>
  </section>

  <footer>
    <div class="index">
      <div class="points"><b>3997.56</b><svg width="30" height="18" viewBox="0 0 30 18"><path d="M2 16L15 3l13 13" /></svg></div>
      <div class="name">上证指数 <em>-0.25%</em></div>
    </div>
    <button class="buy">买</button>
    <button class="sell">卖</button>
    <button class="cancel">撤</button>
    <div class="more"><i></i><i></i><i></i></div>
  </footer>
</main>

<style>
  :global(body) {
    background: #fefefe;
  }

  .screen {
    width: 1280px;
    height: 2781px;
    overflow: hidden;
    display: flex;
    flex-direction: column;
    background: #fefefe;
    color: #222;
    font-family: Inter, 'Noto Sans CJK SC', sans-serif;
  }

  .screen > * {
    flex-shrink: 0;
  }

  svg {
    display: block;
    flex-shrink: 0;
  }

  i,
  em {
    font-style: normal;
  }

  .status {
    height: 170px;
    padding: 72px 0 0 146px;
    box-sizing: border-box;
    display: flex;
    align-items: flex-start;
    color: #000;
  }

  .time {
    width: 149px;
    font-size: 52px;
    line-height: 47px;
    font-weight: 600;
    letter-spacing: 0.2px;
  }

  .mute {
    fill: #000;
  }

  .signal {
    margin: 2px 0 0 564px;
  }

  .net {
    width: 91px;
    margin-left: 20px;
    font-size: 43px;
    line-height: 48px;
    font-weight: 500;
    letter-spacing: -2px;
    white-space: nowrap;
  }

  .net small {
    font-size: 32px;
  }

  .battery {
    position: relative;
    width: 82px;
    height: 43px;
    border-radius: 14px;
    background: linear-gradient(90deg, #000 55%, #b4b4b4 55%);
    color: #fff;
    text-align: center;
    font-size: 38px;
    line-height: 43px;
    font-weight: 700;
  }

  .battery::after {
    content: '';
    position: absolute;
    left: 85px;
    top: 15px;
    width: 5px;
    height: 14px;
    border-radius: 0 5px 5px 0;
    background: #b4b4b4;
  }

  header {
    height: 120px;
    display: flex;
    padding-left: 54px;
  }

  .back {
    margin-top: 25px;
    fill: none;
    stroke: #222;
    stroke-width: 3.5;
  }

  .logo {
    width: 64px;
    height: 63px;
    margin: 16px 0 0 41px;
    border-radius: 10px;
    overflow: hidden;
    background: linear-gradient(#d9262c 52px, #fdf4f2 52px);
    color: #fff;
    text-align: center;
    display: flex;
    flex-direction: column;
  }

  .logo b {
    height: 52px;
    font-family: 'Noto Sans CJK SC', sans-serif;
    font-size: 22px;
    line-height: 23px;
    font-weight: 700;
    padding-top: 3px;
    box-sizing: border-box;
  }

  .logo em {
    font-size: 9px;
    line-height: 11px;
    color: #d9262c;
    font-weight: 800;
  }

  .title {
    width: 470px;
    margin-left: 217px;
    display: flex;
    flex-direction: column;
    align-items: center;
  }

  h1 {
    margin: 0;
    font-size: 45.5px;
    line-height: 52px;
    font-weight: 500;
  }

  .code {
    display: flex;
    align-items: center;
    margin-top: 4px;
    height: 50px;
    font-family: Roboto, sans-serif;
    color: #999;
    font-size: 41px;
    line-height: 50px;
  }

  .code span {
    margin-right: 7px;
  }

  .code i {
    width: 35px;
    height: 35px;
    margin-right: 6px;
    border-radius: 5px;
    background: #bda57e;
    color: #fff;
    font-family: 'Noto Sans CJK SC', sans-serif;
    font-size: 26px;
    line-height: 34px;
    text-align: center;
  }

  .code .hot {
    background: #e9323e;
  }

  .code svg {
    fill: none;
    stroke: #777;
    stroke-width: 2.5;
  }

  .tools {
    display: flex;
    gap: 29.5px;
    margin: 22px 0 0 134.5px;
    fill: none;
    stroke: #222;
    stroke-width: 3.5;
  }

  .traits {
    height: 112px;
    padding-left: 42px;
    display: flex;
    font-size: 40px;
    line-height: 68px;
    color: #666;
    letter-spacing: 0.8px;
  }

  .traits b {
    font-weight: 400;
    color: #222;
    margin-left: 22px;
  }

  .traits .second {
    margin-left: 60px;
  }

  .price {
    height: 111px;
    padding: 0 36px 0 36px;
    display: flex;
    align-items: baseline;
    color: #e5363c;
    font-family: Roboto, sans-serif;
  }

  .price strong {
    width: 296px;
    font-size: 108px;
    line-height: 91px;
    font-weight: 500;
    letter-spacing: -5px;
  }

  .price span {
    width: 119px;
    font-size: 40px;
    font-weight: 500;
  }

  .price svg {
    margin-left: auto;
    align-self: flex-start;
    margin-top: 17px;
    fill: none;
    stroke: #444;
    stroke-width: 3;
  }

  .price .soft {
    stroke: #888;
  }

  .related {
    display: flex;
    gap: 29px;
    padding: 0 36px;
    height: 87px;
  }

  .card {
    flex: 1;
    display: flex;
    align-items: center;
    padding: 0 20px 2px 23px;
    border-radius: 6px;
    background: #f6f6f6;
    font-size: 33px;
    color: #666;
  }

  .card b {
    margin-left: auto;
    font-size: 34px;
    font-weight: 500;
    color: #222;
    word-spacing: -3px;
    white-space: nowrap;
  }

  .card em {
    margin-left: 13px;
    font-family: Roboto, sans-serif;
    font-size: 35px;
    font-weight: 500;
    letter-spacing: -0.8px;
  }

  .up {
    color: #e03a42;
  }

  .down {
    color: #1ea464;
  }

  .arrow {
    margin-left: 26px;
    fill: none;
    stroke: #ddd;
    stroke-width: 2.5;
  }

  .quotes {
    display: grid;
    grid-template-columns: 377px 376px 375px;
    column-gap: 40px;
    grid-auto-rows: 58.3px;
    padding: 11px 36px 0;
    height: 268px;
    box-sizing: border-box;
  }

  .quote {
    position: relative;
    display: flex;
    align-items: center;
    font-size: 39px;
    color: #666;
    white-space: nowrap;
  }

  .quote > svg {
    margin-left: 7px;
    fill: none;
    stroke: #aaa;
    stroke-width: 2.5;
  }

  .quote b {
    margin-left: auto;
    font-family: Roboto, 'Noto Sans CJK SC', sans-serif;
    font-size: 42px;
    font-weight: 500;
    letter-spacing: -1.2px;
    color: #222;
  }

  .quote .red {
    color: #e03a42;
  }

  .quote.low span {
    padding-top: 6px;
  }

  .quote sup {
    margin-left: 5px;
    font-family: Roboto, sans-serif;
    font-size: 25px;
    line-height: 20px;
    align-self: flex-start;
    margin-top: 6px;
  }

  .corner {
    position: absolute;
    right: -16px;
    bottom: -1px;
    border-left: 15px solid transparent;
    border-bottom: 15px solid #999;
  }

  .stage {
    background: #f6f6f6;
    border-radius: 4px;
    text-align: center;
    font-size: 40px;
    line-height: 58px;
    color: #666;
  }

  nav {
    height: 125px;
    border-top: 10px solid #f5f5f5;
    box-sizing: border-box;
    padding-left: 48px;
    display: flex;
    align-items: flex-start;
    font-size: 48px;
    line-height: 110px;
    word-spacing: -5px;
    color: #666;
  }

  nav span {
    position: relative;
    white-space: nowrap;
  }

  nav .active {
    color: #222;
  }

  nav .active::after {
    content: '';
    position: absolute;
    left: -4px;
    top: 97px;
    width: 87px;
    height: 6px;
    background: #da2529;
  }

  nav .corner {
    right: 74px;
    bottom: 13px;
    border-bottom-color: #8e9696;
  }

  nav svg {
    margin-top: 32px;
    fill: none;
    stroke: #222;
    stroke-width: 3;
  }

  .indicators {
    height: 57.5px;
    display: flex;
    align-items: center;
    padding-left: 18px;
    font-size: 37px;
    white-space: nowrap;
    position: relative;
  }

  .indicators > span {
    margin-right: 16px;
    letter-spacing: 0.1px;
    word-spacing: -1px;
  }

  .indicators u {
    margin-left: 4px;
    text-decoration: none;
  }

  .second-row {
    height: 59px;
  }

  .drop {
    display: flex;
    align-items: center;
    width: 194px;
    height: 58px;
    margin-right: 27.5px;
    padding-right: 9px;
    box-sizing: border-box;
    border-radius: 5px;
    background: #efefef;
    color: #333;
  }

  .drop + span {
    margin-left: -9px;
  }

  .indicators:not(:has(.drop + .drop)) .drop + span {
    margin-left: -16px;
  }

  .drop span {
    width: 160px;
    text-align: center;
  }

  .drop i {
    margin-left: 7px;
    border: 9px solid transparent;
    border-top: 13px solid #666;
    border-bottom: 0;
  }

  .gray {
    color: #98999b;
  }

  .olive {
    color: #b6b815;
  }

  .pink {
    color: #cb2bd0;
  }

  .leaf {
    color: #3c9627;
  }

  .brown {
    color: #8b4a40;
  }

  .blue {
    color: #357fd8;
  }

  .round {
    position: absolute;
    left: 1090px;
    top: -3px;
  }

  .round.last {
    left: 1190px;
  }

  .frame {
    fill: none;
    stroke: #dcdcdc;
    stroke-width: 1.5;
  }

  .grid {
    stroke: #dcdcdc;
    stroke-width: 1.5;
  }

  .heavy {
    stroke: #cfcfcf;
    stroke-width: 2;
  }

  .sig {
    stroke-width: 1.3;
    stroke-dasharray: 3 3;
  }

  .sig.red {
    stroke: #d8405c;
  }

  .sig.green {
    stroke: #2aa06c;
  }

  .curve {
    vector-effect: non-scaling-stroke;
    stroke-linejoin: round;
  }

  .axis {
    font-size: 31px;
    fill: #666;
  }

  .faint {
    fill-opacity: 0.75;
  }

  .cost {
    font-size: 36px;
    fill: #999;
  }

  .peak {
    font-size: 37px;
    fill: #777;
  }

  .badge {
    font-size: 36px;
    fill: #fff;
    fill-opacity: 0.92;
    text-anchor: middle;
    font-weight: 300;
  }

  .pill {
    font-size: 32px;
    fill: #fff;
  }

  .dates {
    height: 60px;
    padding: 0 18px;
    display: flex;
    justify-content: space-between;
    font-size: 31px;
    line-height: 34px;
    letter-spacing: 0.3px;
    color: #999;
  }

  .decision {
    height: 234px;
    overflow: hidden;
    padding-left: 35px;
  }

  h2 {
    position: relative;
    margin: 0;
    padding-top: 8px;
    font-size: 46px;
    line-height: 60px;
    font-weight: 900;
    color: #222;
  }

  h2 svg {
    position: absolute;
    left: 11px;
    top: 17px;
    fill: none;
    stroke: #e03a42;
    stroke-width: 6;
  }

  .chips {
    display: flex;
    gap: 18px;
    margin-top: 15px;
    width: 1500px;
  }

  .chip {
    height: 58px;
    box-sizing: border-box;
    border: 2px solid #d5d5d5;
    border-radius: 10px;
    display: flex;
    align-items: center;
    padding-left: 22px;
    gap: 11px;
    font-size: 34px;
    word-spacing: -4px;
    color: #222;
    white-space: nowrap;
  }

  .chip.on {
    border-color: #dd6070;
    color: #e03a42;
  }

  .chip svg {
    fill: none;
    stroke: #222;
    stroke-width: 3;
  }

  .report {
    display: flex;
    width: 1208px;
    height: 120px;
    margin-top: 24px;
    box-sizing: border-box;
    padding-left: 38px;
    border-radius: 12px;
    background: #f5f5f5;
  }

  .brand {
    position: relative;
    width: 114px;
    padding-top: 15px;
  }

  .brand b {
    display: block;
    font-size: 39px;
    line-height: 44px;
    font-weight: 900;
    transform: skewX(-8deg);
  }

  .brand svg {
    position: absolute;
    left: 0;
    top: 16px;
    fill: none;
    stroke: #e5343c;
    stroke-width: 5;
  }

  .brand i {
    display: block;
    width: 78px;
    height: 36px;
    box-sizing: border-box;
    border: 5px solid #e0404a;
    border-radius: 6px;
    background: linear-gradient(90deg, #f5f5f5 46%, #e0404a 46%, #e0404a 54%, #f5f5f5 54%);
  }

  .report p {
    margin: 32px 0 0;
    font-size: 40.3px;
    line-height: 54px;
    font-weight: 500;
    white-space: nowrap;
  }

  .go {
    margin: 42px 0 0 auto;
    padding-right: 42px;
    fill: none;
    stroke: #999;
    stroke-width: 2.5;
  }

  footer {
    flex: 1;
    display: flex;
    background: #fefefe;
    padding: 18px 0 0 36px;
  }

  .index {
    width: 296px;
  }

  .points {
    display: flex;
    align-items: center;
    height: 82px;
    font-family: Roboto, sans-serif;
    color: #1ea464;
  }

  .points b {
    width: 226px;
    font-size: 54px;
    font-weight: 500;
    letter-spacing: -1.5px;
  }

  .points svg {
    fill: none;
    stroke: #777;
    stroke-width: 2.5;
  }

  .name {
    font-size: 34px;
    line-height: 28px;
    white-space: nowrap;
  }

  .name em {
    margin-left: 5px;
    font-family: Roboto, sans-serif;
    font-size: 35px;
    color: #1ea464;
  }

  button {
    width: 262px;
    height: 127px;
    margin: 0 12px 0 0;
    padding: 0;
    border: 0;
    border-radius: 11px;
    font: 500 50px/127px Inter, 'Noto Sans CJK SC', sans-serif;
  }

  .buy {
    background: #fbe0e1;
    color: #dd3640;
  }

  .sell {
    background: #e5ebf7;
    color: #5581d4;
  }

  .cancel {
    background: #f6f6f6;
    color: #666;
  }

  .more {
    display: flex;
    gap: 10px;
    margin: 47px 0 0 30px;
  }

  .more i {
    width: 12px;
    height: 12px;
    border-radius: 50%;
    background: #222;
  }
</style>
